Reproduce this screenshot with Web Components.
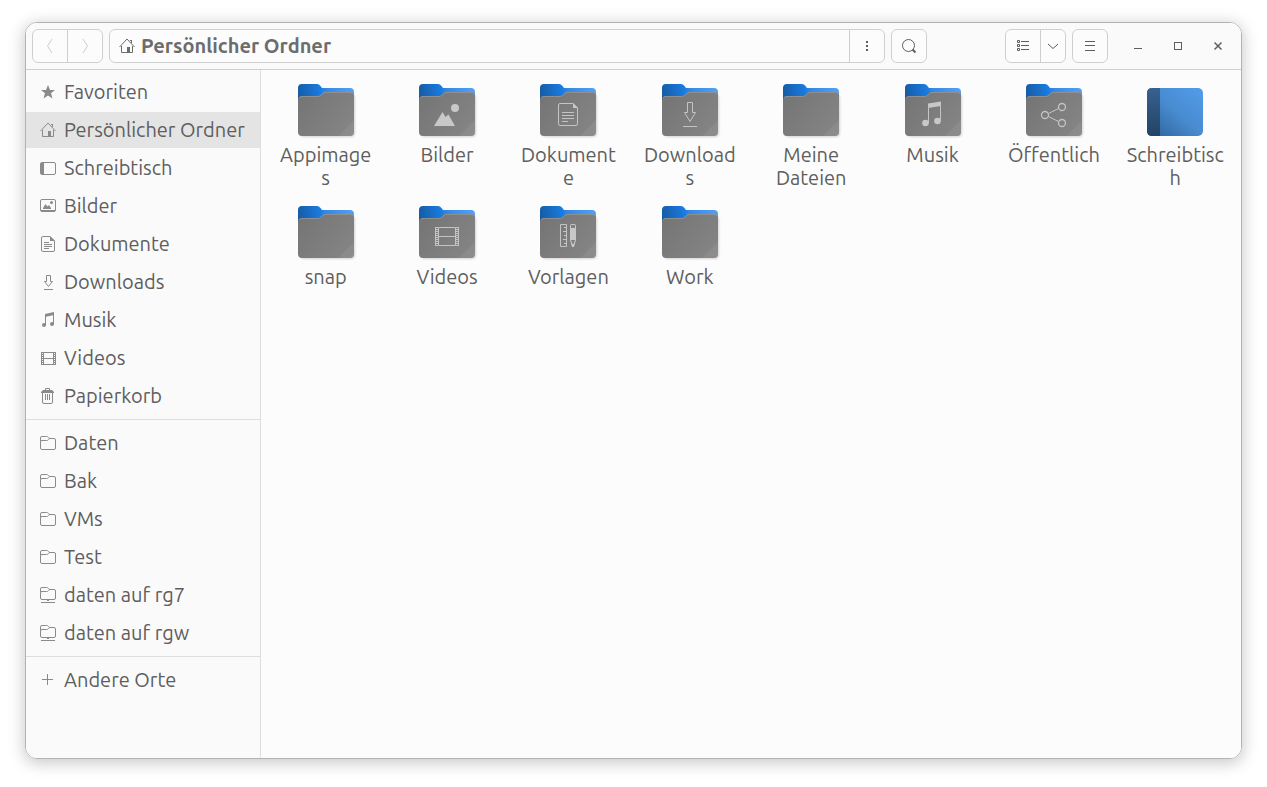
<!DOCTYPE html>
<html lang="de">
<head>
<meta charset="utf-8">
<title>Persönlicher Ordner</title>
<style>
  html { height: 100%; }
  body { margin: 0; min-height: 100%; display: flex; background: #fff; color: #5e5e5e;
    font-family: Ubuntu, "Noto Sans", sans-serif; font-size: 20px; line-height: 23px; }
</style>
</head>
<body>
<file-manager></file-manager>
<script>
// 16px symbolic icons, painted in the current text colour.
const line = 'fill="none" stroke="currentColor"';
const ICONS = {
  star: '<path fill="currentColor" d="M8 1L10 6H15L11 9.300L12.500 14.500L8 11.500L3.500 14.500L5 9.300L1 6H6Z"/>',
  home: `<path ${line} d="M.5 9L8 1L15.500 9M2.500 8V14.500H13.500V8M12.500 5V2"/><path fill="currentColor" d="M8 9h3v6H8zM11 2h2v1h-2z"/>`,
  desktop: `<rect ${line} x=".5" y="2.500" width="15" height="12" rx="1.500"/><path fill="currentColor" d="M1 3h3v11H1z"/>`,
  pictures: `<rect ${line} x=".5" y="1.500" width="15" height="12" rx="1.500"/><path fill="currentColor" d="M1 12h14v2H1zM3 11V10L5.500 6L7.500 8.500L9 7L11 10V11Z"/><circle fill="currentColor" cx="11.500" cy="4.500" r="1.500"/>`,
  document: `<path ${line} d="M10 .5H3Q1.500 .5 1.500 2V14Q1.500 15.500 3 15.500H13Q14.500 15.500 14.500 14V5ZM4 6.500H9M4 8.500H12M4 10.500H12M4 12.500H9"/><path fill="currentColor" d="M10 0L15 5H10Z"/>`,
  download: `<path ${line} d="M6.500 1.500H10.500V7.500H12.500L8.500 12.500L4.500 7.500H6.500ZM4 15.500H13"/>`,
  music: `<path fill="currentColor" d="M5 2L14 0V3L5 5Z"/><path ${line} d="M5.500 3V13M13.500 2V12"/><circle fill="currentColor" cx="4" cy="13" r="2"/><circle fill="currentColor" cx="12" cy="12" r="2"/>`,
  video: `<path ${line} d="M3.500 2.500H13.500V14.500H3.500ZM3 8.500H14M1.500 2V15M15.500 2V15M1 2.500H4M1 4.500H4M1 6.500H4M1 8.500H4M1 10.500H4M1 12.500H4M1 14.500H4M13 2.500H16M13 4.500H16M13 6.500H16M13 8.500H16M13 10.500H16M13 12.500H16M13 14.500H16"/>`,
  trash: `<path ${line} d="M2.500 5V14Q2.500 15.500 4 15.500H11Q12.500 15.500 12.500 14V5M5.500 6V12M7.500 6V12M9.500 6V12M5.500 2V.5H9.500V2"/><path fill="currentColor" d="M1 4L3 2H12L14 4V5H1Z"/>`,
  folder: `<path ${line} d="M.5 6V3Q.5 1.500 2 1.500H6.500Q8 1.500 8.500 2.500T10 3.500H14Q15.500 3.500 15.500 5V13Q15.500 14.500 14 14.500H2Q.5 14.500 .5 13V7Q.5 5.500 2 5.500H6.500Q8 5.500 8.500 4.500T10 3.500"/>`,
  network: `<path ${line} d="M.5 5V2Q.5 .5 2 .5H6.500Q8 .5 8.500 1.500T10 2.500H14Q15.500 2.500 15.500 4V11Q15.500 12.500 14 12.500H2Q.5 12.500 .5 11V6Q.5 4.500 2 4.500H6.500Q8 4.500 8.500 3.500T10 2.500M1 15.500H15M7 13.500H9"/>`,
  plus: `<path ${line} d="M7.500 2V13M2 7.500H13"/>`,
  back: `<path ${line} d="M10 1L5.500 8L10 15"/>`,
  forward: `<path ${line} d="M6 1L10.500 8L6 15"/>`,
  kebab: '<path fill="currentColor" d="M7 3h2v2H7zM7 7h2v2H7zM7 11h2v2H7z"/>',
  search: `<circle ${line} cx="7.500" cy="7.500" r="6"/><path ${line} stroke-width="2" d="M11.500 11.500L14.500 14.500"/>`,
  list: `<path ${line} d="M2.500 2.500h2v2h-2zM2.500 6.500h2v2h-2zM2.500 10.500h2v2h-2zM6 3.500H14M6 7.500H14M6 11.500H14"/>`,
  down: `<path ${line} d="M3 6L8 10.500L13 6"/>`,
  menu: `<path ${line} d="M3 3.500H13M3 7.500H13M3 12.500H13"/>`,
  minimize: `<path ${line} d="M4 10.500H12"/>`,
  maximize: `<rect ${line} x="4.500" y="4.500" width="7" height="7"/>`,
  close: `<path ${line} stroke-width="1.500" d="M4.500 4.500L11.500 11.500M11.500 4.500L4.500 11.500"/>`
};

// Emblems on the front of a 64px folder.
const pale = 'fill="none" stroke="#c4c4c4"';
const EMBLEMS = {
  pictures: '<path fill="#c8c8c8" d="M19 46L27.500 32L30.500 37L33.500 34.500L40 46Z"/><circle fill="#c8c8c8" cx="40" cy="28" r="4"/>',
  document: `<path ${pale} d="M37 23.500H24Q22.500 23.500 22.500 25V44Q22.500 45.500 24 45.500H40Q41.500 45.500 41.500 44V28ZM26 32.500H38M26 35.500H38M26 38.500H38M26 41.500H32"/><path fill="#c8c8c8" d="M37 23L42 28H37Z"/>`,
  download: `<path ${pale} d="M29.500 22.500H34.500V32.500H37.500L32 41.500L26.500 32.500H29.500ZM25 46.500H39"/>`,
  music: `<path fill="#c8c8c8" d="M27 23.500L40 21.500V26L27 28Z"/><path ${pale} d="M27.500 25V43M39.500 23V41"/><circle fill="#c8c8c8" cx="24.500" cy="43" r="3.300"/><circle fill="#c8c8c8" cx="36.500" cy="41" r="3.300"/>`,
  share: `<path ${pale} d="M26.500 33.500L36.500 28.500M26.500 36.500L36.500 41.500"/><circle ${pale} stroke-width="1.300" cx="23" cy="35" r="3.500"/><circle ${pale} stroke-width="1.300" cx="40" cy="27" r="3.500"/><circle ${pale} stroke-width="1.300" cx="40" cy="43" r="3.500"/>`,
  video: `<path ${pale} d="M23.500 25.500H40.500V43.500H23.500ZM23 34.500H41"/><path ${pale} stroke-width="3" stroke-dasharray="1 1" d="M21.500 25V44M42.500 25V44"/><path ${pale} d="M20.500 25V44M43.500 25V44"/>`,
  template: `<path ${pale} d="M24.500 22.500H30.500V44.500H24.500ZM28 25.500H31M27 29.500H31M28 33.500H31M27 37.500H31M28 41.500H31"/><path fill="#c8c8c8" d="M34 24Q34 22 36 22H38Q40 22 40 24V38H34ZM34 38L36 45H38L40 38H39L37.500 42H36.500L35 38Z"/><path fill="#808080" d="M35 23h4v3h-4z"/>`
};

const FOLDER = emblem => `
  <defs>
    <linearGradient id="back" x1="4" y1="15" x2="60" y2="5" gradientUnits="userSpaceOnUse">
      <stop offset="0" stop-color="#165ba3"/><stop offset=".4" stop-color="#1a7be0"/><stop offset=".5" stop-color="#3488e5"/><stop offset="1" stop-color="#55a2f5"/>
    </linearGradient>
    <linearGradient id="front" x1="4" y1="12" x2="60" y2="56" gradientUnits="userSpaceOnUse">
      <stop offset="0" stop-color="#747474"/><stop offset="1" stop-color="#868686"/>
    </linearGradient>
    <filter id="soft"><feGaussianBlur stdDeviation="1"/></filter>
  </defs>
  <rect x="6" y="14" width="55" height="43" rx="4" fill="#000" opacity=".16" filter="url(#soft)"/>
  <path fill="url(#back)" d="M4 24V8Q4 4 8 4H23Q25 4 26.500 6L28 8H56Q60 8 60 12V24Z"/>
  <path fill="url(#front)" d="M4 20Q4 16 8 16H24Q26 16 27 14.500L28 13.500Q29 12 31 12H56Q60 12 60 16V52Q60 56 56 56H8Q4 56 4 52Z"/>
  <path fill="none" stroke="#999" stroke-opacity=".7" d="M5 18Q6 16.500 8 16.500H24Q26 16.500 27.500 14.500T31 12.500H56Q58 12.500 59 14"/>
  <path fill="#fff" opacity=".06" d="M60 40V52Q60 56 56 56H44Z"/>
  ${EMBLEMS[emblem] || ''}`;

const DESKTOP = `
  <defs>
    <linearGradient id="blue" x1="12" y1="56" x2="54" y2="8" gradientUnits="userSpaceOnUse">
      <stop offset="0" stop-color="#2f669e"/><stop offset=".5" stop-color="#488bd0"/><stop offset="1" stop-color="#519be8"/>
    </linearGradient>
    <linearGradient id="dock" x1="0" y1="0" x2="0" y2="1">
      <stop offset="0" stop-color="#38618f"/><stop offset="1" stop-color="#224365"/>
    </linearGradient>
  </defs>
  <rect x="4" y="8" width="56" height="48" rx="5" fill="url(#blue)"/>
  <path fill="url(#dock)" d="M17 8H9Q4 8 4 13V51Q4 56 9 56H17Z"/>`;

function define(name, render) {
  customElements.define(name, class extends HTMLElement {
    connectedCallback() {
      if (this.shadowRoot) return;
      const template = document.createElement('template');
      template.innerHTML = render(this);
      this.attachShadow({ mode: 'open' }).append(template.content.cloneNode(true));
    }
  });
}

define('symbol-icon', el => `
  <style>:host { display: block; flex: none; width: 16px; height: 16px; } svg { display: block; }</style>
  <svg width="16" height="16" viewBox="0 0 16 16" aria-hidden="true">${ICONS[el.getAttribute('name')]}</svg>`);

define('tool-button', el => `
  <style>
    :host { display: flex; flex: none; width: 34px; }
    :host([narrow]) { width: 24px; }
    :host([bare]) { width: 40px; }
    button { flex: 1; display: flex; align-items: center; justify-content: center; margin: 0; padding: 0;
      border: 0; background: none; color: inherit; height: 32px; }
    button:disabled { color: #cdcdcd; }
  </style>
  <button type="button" aria-label="${el.getAttribute('label')}" ${el.hasAttribute('disabled') ? 'disabled' : ''}>
    <symbol-icon name="${el.getAttribute('icon')}"></symbol-icon>
  </button>`);

define('button-group', () => `
  <style>
    :host { display: flex; flex: none; border: 1px solid #cfcfcf; border-radius: 6px; background: #fcfcfc; }
    ::slotted(:not(:first-child)) { border-left: 1px solid #cfcfcf; }
  </style>
  <slot></slot>`);

define('path-segment', () => `
  <style>
    :host { display: flex; flex: 1; min-width: 0; color: #6c6c6c; }
    button { flex: 1; display: flex; align-items: center; gap: 6px; margin: 0; padding: 0 9px; border: 0;
      background: none; color: inherit; font: inherit; font-weight: 700; text-align: left; }
    span { padding-bottom: 2px; }
  </style>
  <button type="button"><symbol-icon name="home"></symbol-icon><span><slot></slot></span></button>`);

define('header-bar', () => `
  <style>
    :host { display: flex; align-items: center; gap: 6px; padding: 6px 3px 6px 6px;
      background: #fafafa; border-bottom: 1px solid #cfcfcf; }
    .path { flex: 1; min-width: 0; }
    .view { margin-left: 72px; }
    .controls { display: flex; margin-left: 4px; }
  </style>
  <button-group>
    <tool-button icon="back" label="Zurück" disabled></tool-button>
    <tool-button icon="forward" label="Vor" disabled></tool-button>
  </button-group>
  <button-group class="path">
    <path-segment>Persönlicher Ordner</path-segment>
    <tool-button icon="kebab" label="Ordnermenü"></tool-button>
  </button-group>
  <button-group><tool-button icon="search" label="Suchen"></tool-button></button-group>
  <button-group class="view">
    <tool-button icon="list" label="Listenansicht"></tool-button>
    <tool-button icon="down" label="Ansichtsoptionen" narrow></tool-button>
  </button-group>
  <button-group><tool-button icon="menu" label="Menü"></tool-button></button-group>
  <div class="controls">
    <tool-button icon="minimize" label="Minimieren" bare></tool-button>
    <tool-button icon="maximize" label="Maximieren" bare></tool-button>
    <tool-button icon="close" label="Schließen" bare></tool-button>
  </div>`);

define('place-item', el => `
  <style>
    :host { display: block; }
    a { display: flex; align-items: center; gap: 8px; height: 36px; padding: 0 14px; color: inherit;
      text-decoration: none; white-space: nowrap; }
    :host([selected]) { background: #e4e4e4; }
    symbol-icon { color: #8a8a8a; }
    span { padding-bottom: 2px; }
  </style>
  <a href="#"><symbol-icon name="${el.getAttribute('icon')}"></symbol-icon><span><slot></slot></span></a>`);

define('places-sidebar', () => `
  <style>
    :host { display: block; flex: none; width: 234px; background: #fafafa; border-right: 1px solid #dedede; }
    nav { display: flex; flex-direction: column; gap: 2px; padding: 4px 0; }
    hr { width: 100%; height: 1px; margin: 3px 0; border: 0; background: #dedede; }
  </style>
  <nav aria-label="Orte">
    <place-item icon="star">Favoriten</place-item>
    <place-item icon="home" selected>Persönlicher Ordner</place-item>
    <place-item icon="desktop">Schreibtisch</place-item>
    <place-item icon="pictures">Bilder</place-item>
    <place-item icon="document">Dokumente</place-item>
    <place-item icon="download">Downloads</place-item>
    <place-item icon="music">Musik</place-item>
    <place-item icon="video">Videos</place-item>
    <place-item icon="trash">Papierkorb</place-item>
    <hr>
    <place-item icon="folder">Daten</place-item>
    <place-item icon="folder">Bak</place-item>
    <place-item icon="folder">VMs</place-item>
    <place-item icon="folder">Test</place-item>
    <place-item icon="network">daten auf rg7</place-item>
    <place-item icon="network">daten auf rgw</place-item>
    <hr>
    <place-item icon="plus">Andere Orte</place-item>
  </nav>`);

define('file-item', el => `
  <style>
    :host { display: block; }
    a { display: flex; flex-direction: column; align-items: center; color: inherit; text-decoration: none; }
    svg { display: block; width: 64px; height: 64px; margin-bottom: -1px; }
    span { width: 98px; text-align: center; overflow-wrap: anywhere; }
  </style>
  <a href="#">
    <svg viewBox="0 0 64 64" aria-hidden="true">${el.hasAttribute('desktop') ? DESKTOP : FOLDER(el.getAttribute('emblem'))}</svg>
    <span><slot></slot></span>
  </a>`);

define('file-grid', () => `
  <style>
    :host { flex: 1; min-width: 0; display: grid; grid-template-columns: repeat(auto-fill, minmax(112px, 1fr));
      align-content: start; row-gap: 13px; padding: 10px 5px 10px 4px; background: #fcfcfc; }
  </style>
  <file-item>Appimages</file-item>
  <file-item emblem="pictures">Bilder</file-item>
  <file-item emblem="document">Dokumente</file-item>
  <file-item emblem="download">Downloads</file-item>
  <file-item>Meine Dateien</file-item>
  <file-item emblem="music">Musik</file-item>
  <file-item emblem="share">Öffentlich</file-item>
  <file-item desktop>Schreibtisch</file-item>
  <file-item>snap</file-item>
  <file-item emblem="video">Videos</file-item>
  <file-item emblem="template">Vorlagen</file-item>
  <file-item>Work</file-item>`);

define('file-manager', () => `
  <style>
    :host { flex: 1; min-width: 0; display: flex; padding: 22px 25px 28px; }
    .window { flex: 1; min-width: 0; display: flex; flex-direction: column; overflow: hidden;
      border: 1px solid #b3b3b3; border-radius: 12px; box-shadow: 0 3px 16px 1px rgba(0, 0, 0, .22); }
    main { flex: 1; display: flex; }
  </style>
  <div class="window">
    <header-bar></header-bar>
    <main><places-sidebar></places-sidebar><file-grid></file-grid></main>
  </div>`);
</script>
</body>
</html>
